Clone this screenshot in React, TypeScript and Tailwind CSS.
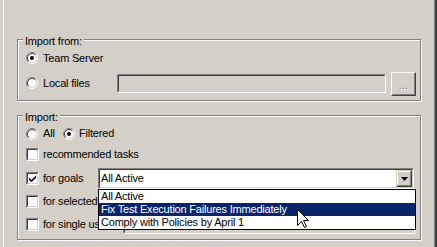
import React from "react";

function Radio({ checked }: { checked?: boolean }) {
  return (
    <svg width="12" height="12" viewBox="0 0 12 12" className="shrink-0">
      <circle cx="6" cy="6" r="5" fill="#fff" />
      <path d="M2.11 9.89 A5.5 5.5 0 0 1 9.89 2.11" stroke="#808080" strokeWidth="1" fill="none" />
      <path d="M9.89 2.11 A5.5 5.5 0 0 1 2.11 9.89" stroke="#ffffff" strokeWidth="1" fill="none" />
      <path d="M2.82 9.18 A4.5 4.5 0 0 1 9.18 2.82" stroke="#404040" strokeWidth="1" fill="none" />
      <path d="M9.18 2.82 A4.5 4.5 0 0 1 2.82 9.18" stroke="#d4d0c8" strokeWidth="1" fill="none" />
      {checked && <circle cx="6" cy="6" r="2" fill="#000" />}
    </svg>
  );
}

function Check({ checked }: { checked?: boolean }) {
  return (
    <div className="w-[13px] h-[13px] shrink-0 border border-t-[#808080] border-l-[#808080] border-b-white border-r-white">
      <div className="w-full h-full bg-white border border-t-[#404040] border-l-[#404040] border-b-[#d4d0c8] border-r-[#d4d0c8] flex items-center justify-center">
        {checked && (
          <svg width="7" height="7" viewBox="0 0 7 7">
            <path d="M0 2.5 L2.5 5 L7 0.5 L7 2.8 L2.5 7.2 L0 4.7 Z" fill="#000" />
          </svg>
        )}
      </div>
    </div>
  );
}

function Sunken({ className, children, inner }: { className: string; children?: React.ReactNode; inner: string }) {
  return (
    <div className={"border border-t-[#808080] border-l-[#808080] border-b-white border-r-white " + className}>
      <div className={"w-full h-full border border-t-[#404040] border-l-[#404040] border-b-[#d4d0c8] border-r-[#d4d0c8] " + inner}>
        {children}
      </div>
    </div>
  );
}

function Group({ title, className, children }: { title: string; className: string; children: React.ReactNode }) {
  return (
    <div className={"relative w-[404px] border border-[#808080] shadow-[inset_1px_1px_0_#fff,1px_1px_0_#fff] " + className}>
      <div className="absolute left-[5px] top-[-5px] px-[2px] bg-[#d4d0c8] leading-[13px]">{title}</div>
      {children}
    </div>
  );
}

export default function App() {
  return (
    <div className="relative w-[437px] h-[247px] overflow-hidden bg-[#d4d0c8] pl-[3px] text-black font-['Liberation_Sans',Arial,sans-serif] text-[11px] tracking-[-0.2px]">
      <div className="h-full border-l border-l-white border-r-2 border-r-[#404040] shadow-[inset_-1px_0_0_#808080] pl-[13px] pt-[39px]">
        <Group title="Import from:" className="h-[62px]">
          <div className="flex flex-col pl-[8px] pt-[8px]">
            <div className="flex items-center h-[20px] gap-[5px]">
              <Radio checked />
              <span>Team Server</span>
            </div>
            <div className="flex items-start h-[24px] mt-[4px]">
              <div className="flex items-center gap-[5px] w-[91px] h-[20px] mt-[1px]">
                <Radio />
                <span>Local files</span>
              </div>
              <Sunken className="w-[269px] h-[19px] mt-[2px]" inner="bg-[#d4d0c8]" />
              <div className="ml-[5px] w-[25px] h-[24px] border border-t-white border-l-white border-b-[#404040] border-r-[#404040]">
                <div className="w-full h-full border border-t-[#d4d0c8] border-l-[#d4d0c8] border-b-[#808080] border-r-[#808080] flex items-center justify-center text-[#808080] [text-shadow:1px_1px_0_#fff] tracking-[0px] pt-[2px]">
                  ...
                </div>
              </div>
            </div>
          </div>
        </Group>

        <Group title="Import:" className="h-[125px] mt-[14px]">
          <div className="flex flex-col pl-[8px] pt-[7px]">
            <div className="flex items-center h-[21px]">
              <div className="flex items-center gap-[5px] w-[37px]">
                <Radio />
                <span>All</span>
              </div>
              <div className="flex items-center gap-[4px]">
                <Radio checked />
                <span>Filtered</span>
              </div>
            </div>
            <div className="flex items-center h-[21px] gap-[4px]">
              <Check />
              <span>recommended tasks</span>
            </div>
            <div className="flex items-center h-[21px] mt-[3px]">
              <div className="flex items-center gap-[4px] w-[72px]">
                <Check checked />
                <span>for goals</span>
              </div>
              <Sunken className="w-[316px] h-[21px]" inner="bg-white flex items-center justify-between">
                <span className="pl-[1px] leading-[13px]">All Active</span>
                <div className="w-[16px] h-[17px] border border-t-[#d4d0c8] border-l-[#d4d0c8] border-b-[#404040] border-r-[#404040]">
                  <div className="w-full h-full bg-[#d4d0c8] border border-t-white border-l-white border-b-[#808080] border-r-[#808080] flex items-center justify-center">
                    <svg width="7" height="4" viewBox="0 0 7 4">
                      <path d="M0 0 H7 L3.5 4 Z" fill="#000" />
                    </svg>
                  </div>
                </div>
              </Sunken>
            </div>
            <div className="flex items-center h-[21px] mt-[2px]">
              <div className="flex items-center gap-[4px] w-[72px] overflow-hidden whitespace-nowrap">
                <Check />
                <span>for selected tags</span>
              </div>
            </div>
            <div className="flex items-center h-[21px] mt-[2px]">
              <div className="flex items-center gap-[4px] w-[72px] overflow-hidden whitespace-nowrap">
                <Check />
                <span>for single user</span>
              </div>
              <Sunken className="w-[292px] h-[18px] mt-[1px] ml-[25px]" inner="bg-[#d4d0c8]" />
            </div>
          </div>
        </Group>
      </div>

      <div className="absolute left-[98px] top-[189px] w-[318px] h-[41px] border border-black bg-white">
        <div className="h-[13px] leading-[13px] pl-[2px]">All Active</div>
        <div className="h-[13px] leading-[13px] pl-[2px] bg-[#0a246a] text-white">Fix Test Execution Failures Immediately</div>
        <div className="h-[13px] leading-[13px] pl-[2px]">Comply with Policies by April 1</div>
      </div>

      <svg className="absolute left-[297px] top-[209px]" width="13" height="20" viewBox="0 0 13 20">
        <path d="M0.5 0.5 L0.5 16.5 L4.5 12.5 L7.5 18.5 L9.5 17.5 L6.5 11.5 L11.5 11.5 Z" fill="#fff" stroke="#000" strokeWidth="1" />
      </svg>
    </div>
  );
}
